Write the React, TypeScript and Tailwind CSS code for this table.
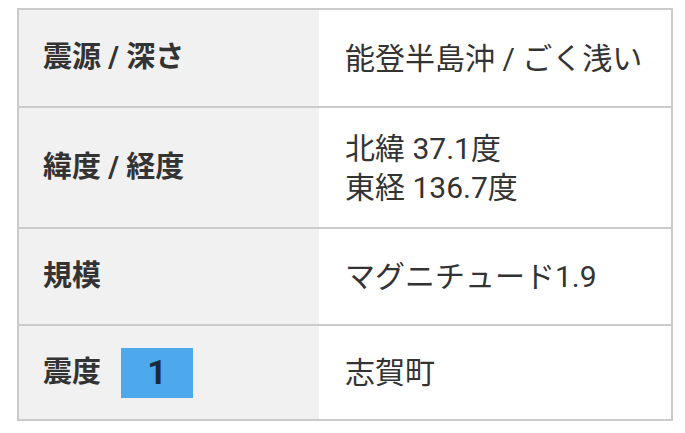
import React from 'react';

const font = { fontFamily: 'Roboto, "Noto Sans CJK JP", sans-serif' };

interface Row {
  label: React.ReactNode;
  value: React.ReactNode;
  height: string;
}

const rows: Row[] = [
  { label: '震源 / 深さ', value: '能登半島沖 / ごく浅い', height: 'h-[96px]' },
  {
    label: '緯度 / 経度',
    value: (
      <>
        <div>北緯 37.1度</div>
        <div>東経 136.7度</div>
      </>
    ),
    height: 'h-[121px]',
  },
  { label: '規模', value: 'マグニチュード1.9', height: 'h-[97px]' },
  {
    label: (
      <div className="flex items-center gap-[20px]">
        <span>震度</span>
        <span className="flex h-[50px] w-[72px] items-center justify-center bg-[#4ea8ec] text-[34px] text-[#1b2b3b]">1</span>
      </div>
    ),
    value: '志賀町',
    height: 'h-[95px]',
  },
];

export default function App() {
  return (
    <div className="min-h-[433px] w-[685px] bg-white pl-[17px] pt-[8px]" style={font}>
      <div className="w-[656px] border-2 border-[#cbcbcb]">
        {rows.map((row, i) => (
          <div
            key={i}
            className={`flex ${row.height} ${i > 0 ? 'border-t-2 border-[#cbcbcb]' : ''}`}
          >
            <div className="flex w-[300px] items-center bg-[#f1f1f1] pl-[24px] text-[29px] font-bold text-[#333333]">
              {row.label}
            </div>
            <div className="flex flex-1 flex-col justify-center pl-[26px] text-[30px] leading-[39px] text-[#333333]">
              {row.value}
            </div>
          </div>
        ))}
      </div>
    </div>
  );
}
